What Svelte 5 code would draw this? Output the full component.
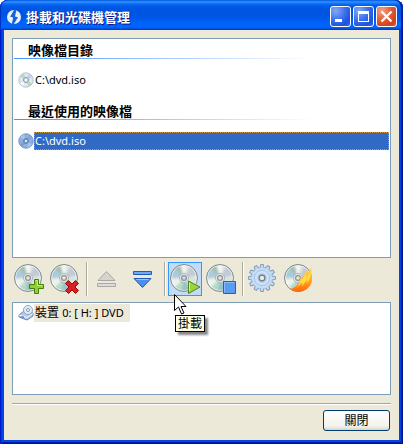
<script>
  let selected = $state('recent');
  const teeth = Array.from({ length: 12 }, (_, i) => i * 30);
</script>

{#snippet disc(id, tint)}
  <defs>
    <linearGradient id="{id}-base" x1="0" y1="0" x2="1" y2="1">
      <stop offset="0" stop-color="#c3cfca" />
      <stop offset=".5" stop-color="#dde4e4" />
      <stop offset="1" stop-color="#eef1ee" />
    </linearGradient>
    <filter id="{id}-soft"><feGaussianBlur stdDeviation="0.9" /></filter>
    <clipPath id="{id}-clip"><circle cx="15" cy="15" r="13" /></clipPath>
  </defs>
  <circle cx="15" cy="15" r="13.5" fill="url(#{id}-base)" />
  <g clip-path="url(#{id}-clip)">
    <g filter="url(#{id}-soft)">
      <path d="M15 15 0 14V5l6-3z" fill="#a9cbdc" />
      <path d="M15 15 4 3l7-3z" fill="#a3bfae" />
      <path d="M15 15 11 0h8z" fill="#f2f5f1" />
      <path d="M15 15 23 1l7 11z" fill="#c3c9d6" />
      <path d="M15 15 30 14v10z" fill="#d6e7da" />
      <path d="M15 15 24 30H12z" fill="#93c3cb" />
      <path d="M15 15 12 30 4 26z" fill="#b4dcc4" />
      <path d="M15 15 4 26 0 17z" fill="#eff3f0" />
    </g>
  </g>
  <circle cx="15" cy="15" r="12.5" fill="none" stroke="#fff" opacity=".6" />
  <circle cx="15" cy="15" r="13.5" fill="none" stroke="#858b8b" />
  <circle cx="15" cy="15" r="4.6" fill="#e0e6e8" stroke="#b2babf" />
  <circle cx="15" cy="15" r="2.4" fill={tint} stroke="#8b9294" stroke-width="1.2" />
{/snippet}

{#snippet smallDisc(active)}
  <svg class="mini" viewBox="0 0 16 16" aria-hidden="true">
    <circle cx="8" cy="8" r="7.2" fill={active ? '#91afdd' : '#dfe8ee'} stroke={active ? '#7594cb' : '#b3c1cc'} />
    <path d="M8 8 2 4.5A7 7 0 0 1 6 1.5zM8 8l6 3.5a7 7 0 0 1-3.5 3z" fill={active ? '#a8c3e6' : '#b7d9c2'} />
    <path d="M8 8 14 5a7 7 0 0 0-3-3z" fill={active ? '#86a5dc' : '#c3cdee'} />
    <path d="M8 8 2 11a7 7 0 0 0 3 3z" fill={active ? '#7da0d4' : '#f5f8f8'} />
    <circle cx="8" cy="8" r="2.6" fill={active ? '#7797ca' : '#cbd6e2'} stroke={active ? '#6688c0' : '#91a4b8'} />
    <circle cx="8" cy="8" r="1" fill="#fff" />
  </svg>
{/snippet}

<main class="window">
  <header class="titlebar">
    <svg class="logo" viewBox="0 0 16 16" aria-hidden="true">
      <circle cx="8" cy="8" r="7" fill="#e8f0f8" />
      <path d="M8.600 0 4.200 7.800l3 .8L5.600 16l1.800-.2 4.600-7.600-3-.800L10.600 0z" fill="#1464d8" />
    </svg>
    <h1>掛載和光碟機管理</h1>
    <div class="controls">
      <button type="button" aria-label="最小化"><svg viewBox="0 0 21 21"><path d="M5 13h7v3H5z" fill="#fff" /></svg></button>
      <button type="button" aria-label="最大化"><svg viewBox="0 0 21 21"><path d="M5 5h11v11H5zM6 8v7h9V8z" fill="#fff" fill-rule="evenodd" /></svg></button>
      <button type="button" class="close" aria-label="關閉視窗"><svg viewBox="0 0 21 21"><path d="m5.5 5.5 10 10m0-10-10 10" stroke="#fff" stroke-width="2.4" /></svg></button>
    </div>
  </header>

  <div class="body">
    <section class="panel images">
      <h2>映像檔目錄</h2>
      <button type="button" class="row" class:selected={selected === 'catalog'} onclick={() => (selected = 'catalog')}>
        {@render smallDisc(selected === 'catalog')}<span class="label latin">C:\dvd.iso</span>
      </button>
      <h2>最近使用的映像檔</h2>
      <button type="button" class="row" class:selected={selected === 'recent'} onclick={() => (selected = 'recent')}>
        {@render smallDisc(selected === 'recent')}<span class="label latin">C:\dvd.iso</span>
      </button>
    </section>

    <nav class="toolbar">
      <button type="button" class="tool" aria-label="新增映像檔">
        <svg viewBox="0 0 32 32">
          {@render disc('add', '#ece9d8')}
          <path d="M21.5 16.5h4v5h5v4h-5v5h-4v-5h-5v-4h5z" fill="#92d02c" stroke="#467e12" />
          <path d="M22.5 17.5h2v5h5" fill="none" stroke="#c8ee72" />
        </svg>
      </button>
      <button type="button" class="tool" aria-label="移除映像檔">
        <svg viewBox="0 0 32 32">
          {@render disc('del', '#ece9d8')}
          <path d="m19.5 17.5 3.5 3.5 3.5-3.5 3 3-3.5 3.5 3.5 3.5-3 3-3.5-3.5-3.5 3.5-3-3 3.5-3.5-3.5-3.5z" fill="#d62222" stroke="#9b0909" />
        </svg>
      </button>
      <i class="sep"></i>
      <button type="button" class="tool" aria-label="退出" disabled>
        <svg viewBox="0 0 32 32">
          <path d="m15.500 8.500 8.500 9H7z" fill="#d5d4d0" stroke="#a8a8a5" />
          <path d="M6.500 20.500h18v3h-18z" fill="#dcdbd7" stroke="#a8a8a5" />
        </svg>
      </button>
      <button type="button" class="tool" aria-label="載入">
        <svg viewBox="0 0 32 32">
          <path d="M6.500 8.500h18v3h-18z" fill="#6ea9f6" stroke="#225abb" />
          <path d="M7 15.500h17l-8.500 9z" fill="#4c91f0" stroke="#225abb" />
          <path d="M9.500 16.500h12" stroke="#9bc5fb" />
        </svg>
      </button>
      <i class="sep"></i>
      <div class="mount">
        <button type="button" class="tool hot" aria-describedby="mount-tip" aria-label="掛載">
          <svg viewBox="0 0 32 32">
            {@render disc('mount', '#c1dcf8')}
            <path d="M19.500 18 31 24l-11.500 6.500z" fill="#9bd240" stroke="#4e881c" />
            <path d="M20.500 20v8" stroke="#d2f093" />
          </svg>
        </button>
        <svg class="cursor" viewBox="0 0 13 21" aria-hidden="true">
          <path d="M.5.5v16l4-3.500 3 7 2.500-1-3-6.500h5z" fill="#fff" stroke="#000" />
        </svg>
        <span id="mount-tip" class="tip" role="tooltip">掛載</span>
      </div>
      <button type="button" class="tool" aria-label="卸載">
        <svg viewBox="0 0 32 32">
          {@render disc('stop', '#ece9d8')}
          <path d="M18.500 18.500h12v12h-12z" fill="#5b9cf3" stroke="#235fc1" />
          <path d="M19.500 29.500v-10h10" fill="none" stroke="#8bbcf9" />
        </svg>
      </button>
      <i class="sep"></i>
      <button type="button" class="tool" aria-label="設定">
        <svg viewBox="0 0 32 32">
          {#each teeth as angle}
            <path d="m12.700 6 1-4.500h2.600l1 4.500z" transform="rotate({angle} 15 15)" fill="#c3daf3" stroke="#7394bc" stroke-width=".9" />
          {/each}
          <circle cx="15" cy="15" r="10.300" fill="#c6dcf4" />
          <circle cx="15" cy="15" r="7.600" fill="#cfe3f8" stroke="#a5c1e2" stroke-width=".9" />
          <circle cx="15" cy="15" r="4.800" fill="#b0cbea" />
          <circle cx="15" cy="15" r="2.800" fill="#ece9d8" stroke="#707c88" stroke-width="1.200" />
        </svg>
      </button>
      <button type="button" class="tool" aria-label="燒錄">
        <svg viewBox="0 0 32 32">
          <defs>
            <linearGradient id="fire" x1="0" y1="0" x2="0" y2="1">
              <stop offset="0" stop-color="#ffd34d" />
              <stop offset=".5" stop-color="#ffae22" />
              <stop offset="1" stop-color="#ff6510" />
            </linearGradient>
          </defs>
          {@render disc('burn', '#ece9d8')}
          <path d="M7 26c4-1 7-3 9-6l2-6 1 1 5-8-.5 5L28.500 4c-.5 3-.5 6 .5 10 .8 8-5 14.500-13.500 15-3.500 0-6-1-8.500-3z" fill="url(#fire)" />
          <path d="M13 25c3-3 4-6 5-10l1 1.500 5-8-1 7 5-8c0 5-1 9-4.500 13l.5-4-5 7 .500-4z" fill="#ffdb45" />
        </svg>
      </button>
    </nav>

    <section class="panel devices">
      <button type="button" class="row device">
        <svg class="mini" viewBox="0 0 16 16" aria-hidden="true">
          <path d="m1 10 5-4 9 2v3l-6 4-8-3z" fill="#b6cbea" stroke="#6482b4" />
          <path d="m1 10 8 2.500 6-4" fill="none" stroke="#f1f6fd" />
          <circle cx="10" cy="5" r="4.500" fill="#e1ecf5" stroke="#8da7c5" />
          <circle cx="10" cy="5" r="1.500" fill="#fff" stroke="#7f9bc0" />
          <path d="M3 12h3" stroke="#3565b8" />
        </svg><span class="label">裝置 <span class="latin">0: [ H: ] DVD</span></span>
      </button>
    </section>

    <footer>
      <button type="button" class="ok">關閉</button>
    </footer>
  </div>
</main>

<style>
  :global(body) { background: #fff; }
  * { box-sizing: border-box; }
  .window {
    display: flex;
    flex-direction: column;
    min-height: 100vh;
    font: 12px/16px "Noto Sans", "Noto Sans CJK TC", sans-serif;
    color: #000;
    padding: 0 4px 4px;
    border-radius: 8px 8px 0 0;
    background: #0046e0;
    box-shadow: inset 1px 0 #0019cf, inset 2px 0 #0831d9, inset -1px 0 #00138c, inset -2px 0 #001dae, inset 0 -1px #00138c, inset 0 -2px #001dae;
  }
  button { font: inherit; color: inherit; padding: 0; margin: 0; border: 0; background: none; }
  .titlebar {
    display: flex;
    align-items: center;
    height: 30px;
    margin: 0 -4px;
    padding: 3px 6px 0;
    border-radius: 8px 8px 0 0;
    background: linear-gradient(#0058e0 0, #3a93ff 2px, #127dff 3px, #0360ec 5px, #0055e2 8px, #0054e3 16px, #0062fa 23px, #0066ff 27px, #004cd4 29px, #0038b8 30px);
    box-shadow: inset 1px 0 #0030c8, inset -2px 0 #0020a8;
  }
  .logo { width: 16px; height: 16px; margin-right: 4px; }
  h1, h2 { margin: 0; font-size: 13px; line-height: 16px; font-weight: 700; }
  h1 { flex: 1; color: #fff; text-shadow: 1px 1px #0a1883; }
  .controls { display: flex; gap: 2px; }
  .controls button {
    width: 21px;
    height: 21px;
    border: 1px solid #fff;
    border-radius: 3px;
    background: radial-gradient(circle at 25% 20%, #84a8f8, #3c70ee 45%, #1f52dc 75%, #2c68f2);
  }
  .controls .close { background: radial-gradient(circle at 25% 20%, #f0a48c, #e25b36 45%, #d2421c 75%, #e6552a); }
  .controls svg { display: block; margin: -1px; width: 21px; height: 21px; }
  .body { flex: 1; display: flex; flex-direction: column; padding: 8px; background: #ece9d8; }
  .panel { border: 1px solid #7f9db9; background: #fff; }
  .images { flex: 1; padding: 3px 1px 0; }
  h2 { position: relative; height: 17px; padding-left: 14px; }
  h2::after {
    content: "";
    position: absolute;
    left: 0;
    bottom: 0;
    width: 300px;
    height: 1px;
    background: linear-gradient(90deg, #4593ff, #fff);
  }
  .row { display: flex; align-items: center; width: 100%; height: 18px; padding-left: 4px; text-align: left; }
  .images .row { margin: 12px 0 14px; }
  .mini { flex: none; width: 16px; height: 16px; }
  .label { flex: 1; height: 18px; padding: 1px; line-height: 16px; }
  .latin { font-size: 11px; }
  .selected .label { color: #fff; background: #316ac5; outline: 1px dotted #ce953a; outline-offset: -1px; }
  .toolbar { display: flex; align-items: center; gap: 2px; height: 44px; padding-bottom: 2px; }
  .tool { display: block; width: 34px; height: 34px; border: 1px solid transparent; }
  .tool svg { display: block; width: 32px; height: 32px; }
  .hot { border-color: #3399ff; background: #c2dcf8; }
  .sep { width: 2px; height: 34px; margin-left: 2px; border-left: 1px solid #aca899; border-right: 1px solid #fff; }
  .mount { position: relative; }
  .cursor { position: absolute; z-index: 2; left: 6px; top: 32px; width: 13px; height: 21px; }
  .tip {
    position: absolute;
    z-index: 1;
    left: 7px;
    top: 53px;
    padding: 0 2px;
    border: 1px solid #000;
    background: #ffffe1;
    box-shadow: 3px 3px 2px #0007;
    line-height: 15px;
    white-space: nowrap;
  }
  .devices { height: 93px; padding: 1px 0 0 1px; }
  .device { width: auto; }
  .device .label { padding-right: 6px; background: #ece9d8; }
  footer { display: flex; justify-content: flex-end; margin-top: 8px; padding: 6px 0 1px; border-top: 1px solid #aca899; box-shadow: inset 0 1px #fff; }
  .ok {
    width: 67px;
    height: 21px;
    margin-right: 1px;
    border: 1px solid #003c74;
    border-radius: 3px;
    background: linear-gradient(#fff, #f3f2ec 80%, #d9d4c8);
  }
</style>
